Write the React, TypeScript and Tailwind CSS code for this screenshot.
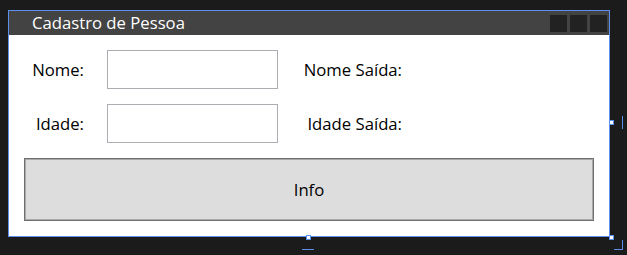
const font = { fontFamily: '"Open Sans", "Noto Sans", sans-serif' };

function Field({ label }: { label: string }) {
  return (
    <div className="flex items-center h-[39px]">
      <div className="w-[75px] text-right text-[16.7px] text-black">{label}</div>
      <div className="ml-[23px] w-[171px] h-[39px] border border-[#abadb3] bg-white" />
    </div>
  );
}

function Output({ label }: { label: string }) {
  return <div className="w-[124px] text-right text-[16.7px] text-black">{label}</div>;
}

export default function App() {
  return (
    <div className="w-[627px] h-[255px] bg-[#1b1b1b] pt-[10px] pl-[8px]" style={font}>
      <div className="relative w-[602px] h-[227px] border border-[#5b8ff0] bg-white flex flex-col">
        {/* title bar */}
        <div className="h-[24px] bg-[#434343] flex items-center pl-[23px] pr-[2px]">
          <span className="flex-1 text-[16.7px] text-white leading-none">Cadastro de Pessoa</span>
          <div className="flex gap-[3px] h-[17px] mt-[1px]">
            <div className="w-[17px] h-full bg-[#222222]" />
            <div className="w-[17px] h-full bg-[#222222]" />
            <div className="w-[17px] h-full bg-[#222222]" />
          </div>
        </div>

        {/* form */}
        <div className="flex flex-col gap-[15px] pt-[15px]">
          <div className="flex items-center">
            <Field label="Nome:" />
            <Output label="Nome Saída:" />
          </div>
          <div className="flex items-center">
            <Field label="Idade:" />
            <Output label="Idade Saída:" />
          </div>
        </div>

        <button className="mt-[15px] ml-[15px] w-[570px] h-[63px] bg-[#dddddd] border border-[#707070] shadow-[inset_0_0_0_1px_#a9a9a9] text-[16.7px] text-black">
          Info
        </button>

        {/* designer handles */}
        <div className="absolute left-[297px] bottom-[-4px] w-[5px] h-[5px] bg-white border border-[#5b8ff0]" />
        <div className="absolute right-[-5px] top-[109px] w-[5px] h-[5px] bg-white border border-[#5b8ff0]" />
        <div className="absolute right-[-5px] bottom-[-4px] w-[5px] h-[5px] bg-white border border-[#5b8ff0]" />
        <div className="absolute left-[293px] bottom-[-14px] w-[12px] h-[1px] bg-[#5b8ff0]" />
        <div className="absolute right-[-14px] top-[105px] w-[1px] h-[13px] bg-[#5b8ff0]" />
        <div className="absolute right-[-14px] bottom-[-14px] w-[9px] h-[10px] border-r border-b border-[#5b8ff0]" />
      </div>
    </div>
  );
}
